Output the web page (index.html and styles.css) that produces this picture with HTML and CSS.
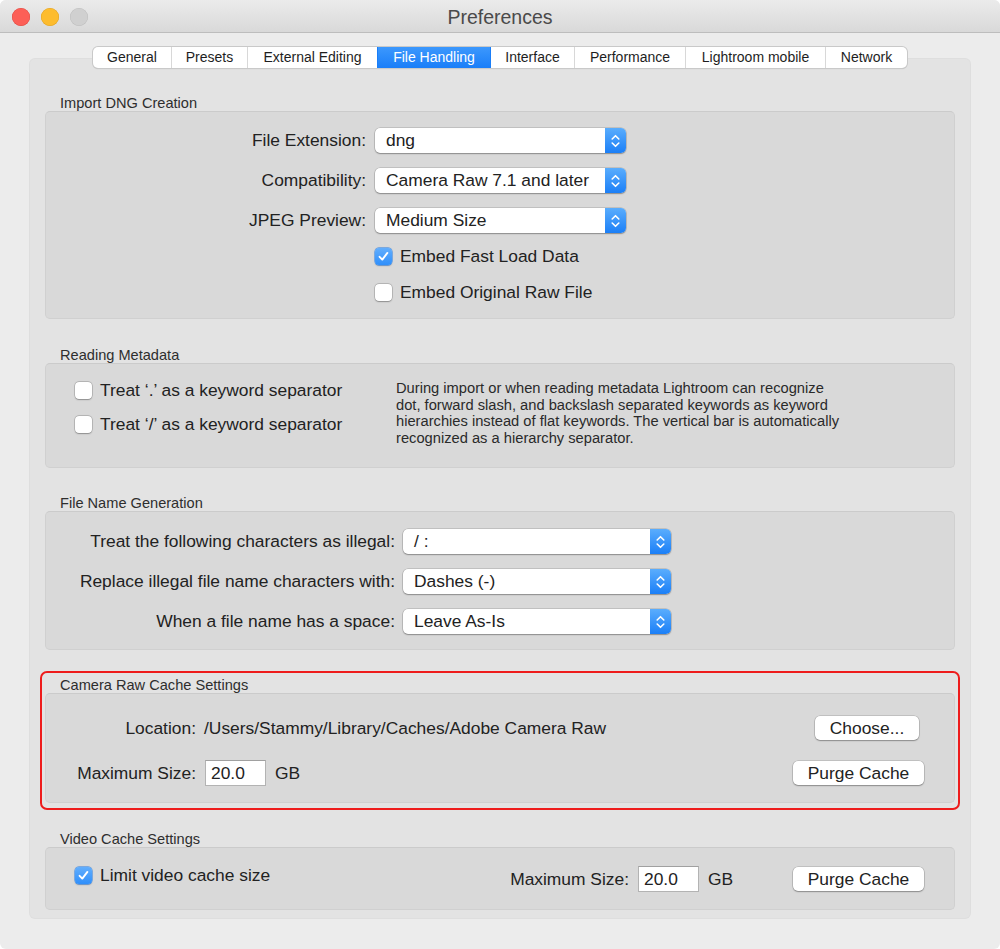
FILE: index.html
```html
<!DOCTYPE html>
<html>
<head>
<meta charset="utf-8">
<title>Preferences</title>
<link rel="stylesheet" href="styles.css">
</head>
<body>
<div class="window">
  <div class="titlebar">
    <div class="lights">
      <span class="light red"></span>
      <span class="light yellow"></span>
      <span class="light grey"></span>
    </div>
    <div class="title">Preferences</div>
  </div>

  <div class="tabs">
    <div class="tab">General</div>
    <div class="tab">Presets</div>
    <div class="tab">External Editing</div>
    <div class="tab active">File Handling</div>
    <div class="tab">Interface</div>
    <div class="tab">Performance</div>
    <div class="tab">Lightroom mobile</div>
    <div class="tab">Network</div>
  </div>

  <div class="panel">
    <section class="group">
      <div class="group-label">Import DNG Creation</div>
      <div class="box box-dng">
        <div class="form-row">
          <span class="lbl lbl-dng">File Extension:</span>
          <div class="popup popup-dng"><span class="popup-text">dng</span><span class="popup-arrow"><svg width="9" height="14" viewBox="0 0 9 14"><path d="M1.2 5 L4.5 1.7 L7.8 5 M1.2 9 L4.5 12.3 L7.8 9" fill="none" stroke="#fff" stroke-width="1.6" stroke-linecap="round" stroke-linejoin="round"/></svg></span></div>
        </div>
        <div class="form-row">
          <span class="lbl lbl-dng">Compatibility:</span>
          <div class="popup popup-dng"><span class="popup-text">Camera Raw 7.1 and later</span><span class="popup-arrow"><svg width="9" height="14" viewBox="0 0 9 14"><path d="M1.2 5 L4.5 1.7 L7.8 5 M1.2 9 L4.5 12.3 L7.8 9" fill="none" stroke="#fff" stroke-width="1.6" stroke-linecap="round" stroke-linejoin="round"/></svg></span></div>
        </div>
        <div class="form-row">
          <span class="lbl lbl-dng">JPEG Preview:</span>
          <div class="popup popup-dng"><span class="popup-text">Medium Size</span><span class="popup-arrow"><svg width="9" height="14" viewBox="0 0 9 14"><path d="M1.2 5 L4.5 1.7 L7.8 5 M1.2 9 L4.5 12.3 L7.8 9" fill="none" stroke="#fff" stroke-width="1.6" stroke-linecap="round" stroke-linejoin="round"/></svg></span></div>
        </div>
        <div class="check-row check-dng first">
          <span class="checkbox checked"><svg width="13" height="13" viewBox="0 0 13 13"><path d="M2.6 6.8 L5.3 9.6 L10.4 2.9" fill="none" stroke="#fff" stroke-width="1.9" stroke-linecap="round" stroke-linejoin="round"/></svg></span>
          <span class="check-text">Embed Fast Load Data</span>
        </div>
        <div class="check-row check-dng second">
          <span class="checkbox"></span>
          <span class="check-text">Embed Original Raw File</span>
        </div>
      </div>
    </section>

    <section class="group">
      <div class="group-label">Reading Metadata</div>
      <div class="box box-meta">
        <div class="meta-checks">
          <div class="check-row">
            <span class="checkbox"></span>
            <span class="check-text">Treat ‘.’ as a keyword separator</span>
          </div>
          <div class="check-row meta-second">
            <span class="checkbox"></span>
            <span class="check-text">Treat ‘/’ as a keyword separator</span>
          </div>
        </div>
        <p class="meta-desc">During import or when reading metadata Lightroom can recognize<br>dot, forward slash, and backslash separated keywords as keyword<br>hierarchies instead of flat keywords. The vertical bar is automatically<br>recognized as a hierarchy separator.</p>
      </div>
    </section>

    <section class="group group-tight">
      <div class="group-label">File Name Generation</div>
      <div class="box box-name">
        <div class="form-row">
          <span class="lbl lbl-name">Treat the following characters as illegal:</span>
          <div class="popup popup-name"><span class="popup-text">/ :</span><span class="popup-arrow"><svg width="9" height="14" viewBox="0 0 9 14"><path d="M1.2 5 L4.5 1.7 L7.8 5 M1.2 9 L4.5 12.3 L7.8 9" fill="none" stroke="#fff" stroke-width="1.6" stroke-linecap="round" stroke-linejoin="round"/></svg></span></div>
        </div>
        <div class="form-row">
          <span class="lbl lbl-name">Replace illegal file name characters with:</span>
          <div class="popup popup-name"><span class="popup-text">Dashes (-)</span><span class="popup-arrow"><svg width="9" height="14" viewBox="0 0 9 14"><path d="M1.2 5 L4.5 1.7 L7.8 5 M1.2 9 L4.5 12.3 L7.8 9" fill="none" stroke="#fff" stroke-width="1.6" stroke-linecap="round" stroke-linejoin="round"/></svg></span></div>
        </div>
        <div class="form-row">
          <span class="lbl lbl-name">When a file name has a space:</span>
          <div class="popup popup-name"><span class="popup-text">Leave As-Is</span><span class="popup-arrow"><svg width="9" height="14" viewBox="0 0 9 14"><path d="M1.2 5 L4.5 1.7 L7.8 5 M1.2 9 L4.5 12.3 L7.8 9" fill="none" stroke="#fff" stroke-width="1.6" stroke-linecap="round" stroke-linejoin="round"/></svg></span></div>
        </div>
      </div>
    </section>

    <section class="group group-tight">
      <div class="group-label">Camera Raw Cache Settings</div>
      <div class="box box-raw">
        <div class="raw-row">
          <span class="lbl lbl-raw">Location:</span>
          <span class="path">/Users/Stammy/Library/Caches/Adobe Camera Raw</span>
          <button class="btn btn-choose">Choose...</button>
        </div>
        <div class="raw-row raw-second">
          <span class="lbl lbl-raw lbl-size">Maximum Size:</span>
          <span class="field">20.0</span>
          <span class="unit">GB</span>
          <button class="btn btn-purge">Purge Cache</button>
        </div>
      </div>
      <div class="annotation"></div>
    </section>

    <section class="group">
      <div class="group-label">Video Cache Settings</div>
      <div class="box box-video">
        <div class="check-row video-check">
          <span class="checkbox checked"><svg width="13" height="13" viewBox="0 0 13 13"><path d="M2.6 6.8 L5.3 9.6 L10.4 2.9" fill="none" stroke="#fff" stroke-width="1.9" stroke-linecap="round" stroke-linejoin="round"/></svg></span>
          <span class="check-text">Limit video cache size</span>
        </div>
        <span class="lbl video-lbl">Maximum Size:</span>
        <span class="field">20.0</span>
        <span class="unit unit-video">GB</span>
        <button class="btn btn-purge">Purge Cache</button>
      </div>
    </section>
  </div>
</div>
</body>
</html>
```

FILE: styles.css
```css
* { box-sizing: border-box; }

html, body {
  margin: 0;
  padding: 0;
  background: #ffffff;
}

body {
  font-family: "Liberation Sans", Arial, sans-serif;
  color: #262626;
}

.window {
  width: 1000px;
  height: 949px;
  background: #ececec;
  border-radius: 6px;
  overflow: hidden;
}

/* Title bar */
.titlebar {
  position: relative;
  height: 33px;
  background: linear-gradient(#ebebeb, #d9d9d9);
  border-bottom: 1px solid #bdbdbd;
  display: flex;
  align-items: center;
  justify-content: center;
}

.lights {
  position: absolute;
  left: 12px;
  top: 8px;
  display: flex;
  gap: 11px;
}

.light {
  width: 18px;
  height: 18px;
  border-radius: 50%;
  display: block;
}
.light.red { background: #fc5f57; box-shadow: inset 0 0 0 0.5px #de4a42; }
.light.yellow { background: #fdbc2e; box-shadow: inset 0 0 0 0.5px #dea123; }
.light.grey { background: #d0d0d0; box-shadow: inset 0 0 0 0.5px #bdbdbd; }

.title {
  font-size: 19.5px;
  color: #4a4a4a;
  line-height: 33px;
  padding-top: 2px;
}

/* Tabs */
.tabs {
  position: relative;
  z-index: 2;
  margin: 14px auto -9px;
  height: 21px;
  display: flex;
  width: max-content;
  background: #fff;
  border-radius: 5px;
  box-shadow: 0 0 0 1px #c9c9c9, 0 1px 1px rgba(0,0,0,0.18);
}

.tab {
  font-size: 14px;
  line-height: 21px;
  padding: 0;
  text-align: center;
  color: #1e1e1e;
  border-left: 1px solid #d8d8d8;
}
.tab:nth-child(1) { width: 78px; }
.tab:nth-child(2) { width: 76px; }
.tab:nth-child(3) { width: 130px; }
.tab:nth-child(4) { width: 113px; }
.tab:nth-child(5) { width: 84px; }
.tab:nth-child(6) { width: 111px; }
.tab:nth-child(7) { width: 140px; }
.tab:nth-child(8) { width: 82px; }
.tab:first-child { border-left: none; border-radius: 5px 0 0 5px; }
.tab:last-child { border-radius: 0 5px 5px 0; }
.tab.active {
  background: linear-gradient(#3c98fd, #1a7ef8);
  color: #fff;
  border-left-color: #1a7ef8;
}
.tab.active + .tab { border-left-color: #1a7ef8; }

/* Panel */
.panel {
  margin: 0 30px;
  background: #e3e3e3;
  border-radius: 5px;
  box-shadow: 0 0 0 1px #dedede;
  padding: 35px 15px 8px;
}

.group { position: relative; }
.group + .group { margin-top: 27px; }
.group + .group.group-tight { margin-top: 26px; }

.group-label {
  font-size: 14.6px;
  line-height: 16px;
  height: 17px;
  padding: 1px 0 0 15px;
  color: #2e2e2e;
}

.box {
  background: #d9d9d9;
  border: 1px solid #d0d0d0;
  border-top-color: #cbcbcb;
  border-radius: 5px;
}

.lbl {
  font-size: 17.4px;
  text-align: right;
  color: #222;
  white-space: nowrap;
}

/* Form rows with popups */
.form-row {
  display: flex;
  align-items: center;
  height: 25px;
}
.form-row + .form-row { margin-top: 15px; }

.popup {
  position: relative;
  height: 25px;
  background: #fff;
  border-radius: 5px;
  box-shadow: 0 0 0 0.5px rgba(0,0,0,0.22), 0 1px 1.5px rgba(0,0,0,0.28);
  display: flex;
  align-items: center;
}
.popup-text {
  flex: 1;
  font-size: 17.4px;
  padding-left: 11px;
  color: #222;
  white-space: nowrap;
}
.popup-arrow {
  width: 21px;
  height: 25px;
  border-radius: 0 5px 5px 0;
  background: linear-gradient(#5aadfd, #1b7ff7);
  display: flex;
  align-items: center;
  justify-content: center;
}

/* DNG box */
.box-dng { height: 208px; padding-top: 16px; }
.lbl-dng { width: 320px; margin-right: 9px; }
.popup-dng { width: 251px; }

.check-row {
  display: flex;
  align-items: center;
  height: 20px;
}
.check-dng { margin-left: 329px; }
.check-dng.first { margin-top: 13px; }
.check-dng.second { margin-top: 16px; }

.checkbox {
  width: 17px;
  height: 17px;
  border-radius: 4px;
  background: #fff;
  box-shadow: 0 0 0 0.5px rgba(0,0,0,0.25), 0 0.5px 1.5px rgba(0,0,0,0.25);
  display: flex;
  align-items: center;
  justify-content: center;
  flex: none;
}
.checkbox.checked {
  background: linear-gradient(#62aefd, #2f8ffb);
  box-shadow: 0 0 0 0.5px #2a82ec, 0 0.5px 1.5px rgba(0,0,0,0.25);
}
.check-text {
  font-size: 17.4px;
  margin-left: 8px;
  color: #222;
  white-space: nowrap;
}

/* Metadata box */
.box-meta {
  height: 105px;
  padding: 16px 0 0 29px;
  display: flex;
  align-items: flex-start;
}
.meta-checks { width: 321px; }
.meta-second { margin-top: 14px; }
.meta-desc {
  margin: 0;
  font-size: 14.7px;
  line-height: 16.5px;
  color: #2a2a2a;
  white-space: nowrap;
}

/* File name box */
.box-name { height: 139px; padding-top: 17px; }
.lbl-name { width: 349px; margin-right: 8px; }
.popup-name { width: 268px; }

/* Camera raw cache */
.box-raw { height: 110px; padding: 22px 35px 0 0; }
.raw-row {
  display: flex;
  align-items: center;
  height: 24px;
}
.raw-second { margin-top: 20px; height: 26px; margin-right: -5px; }
.lbl-raw { width: 150px; margin-right: 8px; }
.lbl-size { margin-right: 9px; }
.path { font-size: 17.4px; color: #222; white-space: nowrap; }

.btn {
  font-family: "Liberation Sans", Arial, sans-serif;
  font-size: 17.4px;
  color: #222;
  height: 24px;
  padding: 0;
  border: none;
  border-radius: 5px;
  background: #fff;
  box-shadow: 0 0 0 0.5px rgba(0,0,0,0.22), 0 1px 1.5px rgba(0,0,0,0.28);
  margin-left: auto;
}
.btn-choose { width: 104px; }
.btn-purge { width: 131px; }

.field {
  width: 61px;
  height: 26px;
  background: #fff;
  border: 1px solid #b3b3b3;
  border-top-color: #a0a0a0;
  font-size: 17.4px;
  line-height: 24px;
  padding-left: 5px;
  color: #222;
  flex: none;
}
.unit {
  font-size: 17.4px;
  margin-left: 9px;
  color: #222;
}

.annotation {
  position: absolute;
  left: -5px;
  right: -5px;
  top: -5px;
  bottom: -7px;
  border: 2px solid #ee1c1c;
  border-radius: 7px;
  pointer-events: none;
}

/* Video cache */
.box-video {
  height: 63px;
  padding: 18px 30px 0 29px;
  display: flex;
  align-items: flex-start;
}
.video-check { flex: 1; margin-top: -1px; }
.video-lbl { margin-right: 9px; line-height: 26px; }
.box-video .unit { width: 85px; margin-left: 9px; line-height: 26px; }
.box-video .btn { margin-left: 0; margin-top: 1px; }
```
